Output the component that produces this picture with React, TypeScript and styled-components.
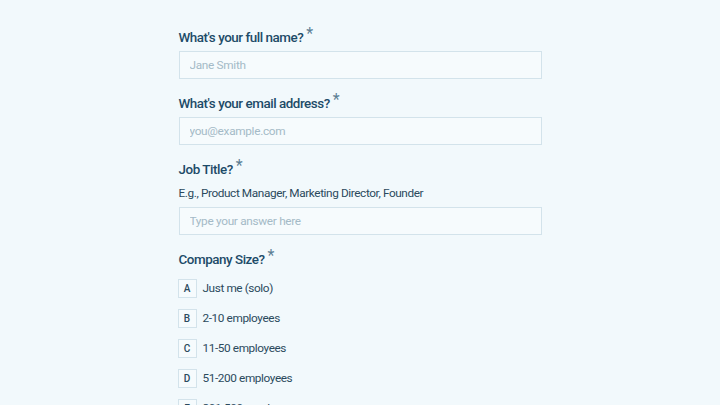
import styled, { createGlobalStyle } from "styled-components";

const GlobalStyle = createGlobalStyle`
  html, body {
    margin: 0;
    padding: 0;
    background: #f2f9fc;
    font-family: Roboto, "Liberation Sans", sans-serif;
  }
`;

const Page = styled.div`
  width: 720px;
  height: 405px;
  overflow: hidden;
  background: #f2f9fc;
`;

const Form = styled.div`
  width: 363px;
  margin: 0 auto;
  padding-top: 27px;
  display: flex;
  flex-direction: column;
`;

const Field = styled.div`
  display: flex;
  flex-direction: column;
  margin-bottom: 14px;
`;

const Label = styled.div`
  font-size: 13.4px;
  line-height: 20px;
  font-weight: 500;
  letter-spacing: -0.45px;
  color: #1d4b68;
  margin-bottom: 3px;
`;

const Star = styled.span`
  color: #5d7f94;
  font-size: 16px;
  font-weight: 400;
  position: relative;
  top: -3px;
  margin-left: 3px;
`;

const Hint = styled.div`
  font-size: 11.8px;
  line-height: 18px;
  letter-spacing: -0.4px;
  color: #2b4a5d;
  margin: 1px 0 5px;
`;

const Input = styled.input`
  box-sizing: border-box;
  height: 28px;
  width: 100%;
  border: 1px solid #d3e3eb;
  background: #f6fbfd;
  padding: 0 10px;
  font-family: inherit;
  font-size: 11.8px;
  letter-spacing: -0.3px;
  color: #2b4a5d;
  outline: none;
  &::placeholder {
    color: #a4bac7;
  }
`;

const Options = styled.div`
  display: flex;
  flex-direction: column;
  gap: 12px;
  margin-top: 6px;
`;

const Option = styled.div`
  display: flex;
  align-items: center;
  gap: 6px;
  height: 18px;
`;

const Key = styled.span`
  box-sizing: border-box;
  width: 19px;
  height: 19px;
  margin-left: -1px;
  border: 1px solid #d3e3eb;
  background: #f6fbfd;
  display: flex;
  align-items: center;
  justify-content: center;
  font-size: 10px;
  font-weight: 500;
  color: #2b4a5d;
`;

const OptionText = styled.span`
  font-size: 11.8px;
  letter-spacing: -0.4px;
  color: #2b4a5d;
`;

const sizes = [
  ["A", "Just me (solo)"],
  ["B", "2-10 employees"],
  ["C", "11-50 employees"],
  ["D", "51-200 employees"],
  ["E", "201-500 employees"],
];

const App: React.FC = () => {
  return (
    <Page>
      <GlobalStyle />
      <Form>
        <Field>
          <Label>
            What's your full name?<Star>*</Star>
          </Label>
          <Input placeholder="Jane Smith" />
        </Field>
        <Field>
          <Label>
            What's your email address?<Star>*</Star>
          </Label>
          <Input placeholder="you@example.com" />
        </Field>
        <Field>
          <Label>
            Job Title?<Star>*</Star>
          </Label>
          <Hint>E.g., Product Manager, Marketing Director, Founder</Hint>
          <Input placeholder="Type your answer here" />
        </Field>
        <Field>
          <Label>
            Company Size?<Star>*</Star>
          </Label>
          <Options>
            {sizes.map(([k, t]) => (
              <Option key={k}>
                <Key>{k}</Key>
                <OptionText>{t}</OptionText>
              </Option>
            ))}
          </Options>
        </Field>
      </Form>
    </Page>
  );
};

export default App;
